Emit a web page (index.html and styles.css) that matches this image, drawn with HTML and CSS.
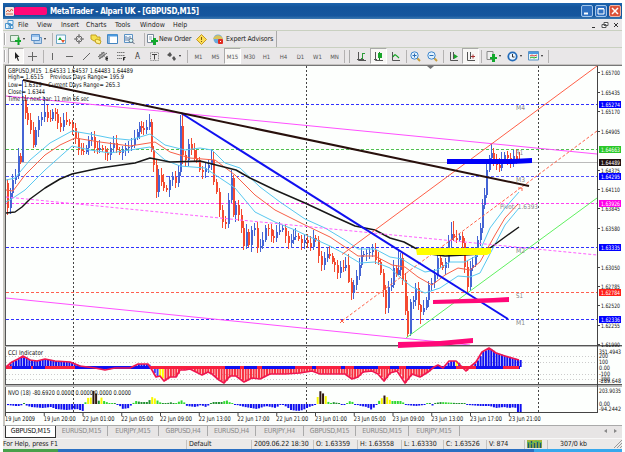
FILE: index.html
```html
<!DOCTYPE html>
<html lang="en">
<head>
    <meta charset="UTF-8">
    <meta name="viewport" content="width=device-width, initial-scale=1.0">
    <title>MetaTrader - Alpari UK - [GBPUSD,M15]</title>
    <link rel="stylesheet" href="styles.css">
</head>
<body>
    <div class="window">
        <div class="titlebar">
            <svg class="app-icon" width="9" height="9" viewBox="0 0 9 9"><rect width="9" height="9" rx="1" fill="#f3e6e0"/><path d="M1 5l2-2 1.500 2 2-3L8 4M1 7h7" stroke="#d0604a" fill="none"/></svg>
            <span class="redacted"></span>
            <span class="title">MetaTrader - Alpari UK - [GBPUSD,M15]</span>
            <div class="win-buttons">
                <span><svg width="10" height="10"><path d="M2 7.500h4" stroke="#fff" stroke-width="2"/></svg></span>
                <span><svg width="10" height="10"><path d="M2 3h6v5H2zM2 2.500h6" stroke="#fff" fill="none"/></svg></span>
                <span class="close"><svg width="10" height="10"><path d="M2 2l6 6M8 2L2 8" stroke="#fff" stroke-width="1.500"/></svg></span>
            </div>
        </div>

        <div class="menubar">
            <svg width="9" height="9" viewBox="0 0 9 9"><path d="M3 .5h5v4H3zM.5 3.500h5v5h-5zM4 5.500h4v3H4z" fill="#e8f4fc" stroke="#4b94cc"/></svg>
            <span>File</span><span>View</span><span>Insert</span><span>Charts</span><span>Tools</span><span>Window</span><span>Help</span>
            <div class="mdi-buttons">
                <svg width="8" height="8"><path d="M2 6.500h3" stroke="#333"/></svg>
                <svg width="8" height="8"><path d="M3 1.500h4v3H3zM1 3.500h4v3H1z" stroke="#555" fill="#fff"/></svg>
                <svg width="8" height="8"><path d="M2 2l4 4M6 2L2 6" stroke="#333"/></svg>
            </div>
        </div>

        <div class="toolbar standard">
            <i class="grip"></i>
            <span><svg width="11" height="11"><path d="M.5 1.500h8v6h-8z" fill="#e6f3e9" stroke="#6f9a78"/><path d="M5 6h2.500V3.500h2V6H12v2H9.500v3h-2V8H5z" fill="#12a82c"/></svg><b class="caret"></b></span>
            <span><svg width="11" height="11"><path d="M3 3.500h7.500v6H3z" fill="#bcd6f0" stroke="#6795c4"/><path d="M.5 .5h8v6h-8z" fill="#d9eafa" stroke="#5a8fc7"/><path d="M1 2h7" stroke="#5a9be0"/></svg><b class="caret"></b></span>
            <i class="sep"></i>
            <span><svg width="11" height="11"><path d="M.5 1h9v8.500h-9z" fill="#f4fbff" stroke="#6aa5c4"/><path d="M2 6l2-3 2 3z" fill="#19a52a"/><path d="M5 6h4L7 9z" fill="#e2542d"/></svg></span>
            <span><svg width="10" height="10"><circle cx="5" cy="5" r="3" fill="none" stroke="#666"/><path d="M5 0v4M5 6v4M0 5h4M6 5h4" stroke="#666"/></svg></span>
            <span><svg width="12" height="11"><path d="M1 1h5l1 2h3v4H4L1 5z" fill="#f6e14c" stroke="#c4a221"/><path d="M5 6l2-1 4 2-1 3-4-1z" fill="#fff18a" stroke="#c4a221"/></svg></span>
            <span><svg width="11" height="10"><path d="M.5 .5h10v9H.5z" fill="#fff" stroke="#4385c0"/><path d="M1 1.500h9" stroke="#4c9be2" stroke-width="2"/><path d="M2 2v7" stroke="#86b3de" stroke-width="2"/></svg></span>
            <span><svg width="11" height="11"><path d="M.5 .5h8v8h-8z" fill="#eef6fc" stroke="#5b92c4"/><path d="M2 2v5M4 3v4M6 2v3" stroke="#5c7da6"/><circle cx="7" cy="6.500" r="2" fill="#dff" stroke="#678"/><path d="M8.500 8l2 2" stroke="#567"/></svg></span>
            <i class="sep"></i>
            <span class="wide"><svg width="11" height="11"><path d="M.5 .5h6v8h-6z" fill="#fff" stroke="#789"/><path d="M2 3h3M2 5h3" stroke="#9ab"/><path d="M4 6h2V4h3v2h2v2H9v3H6V8H4z" fill="#12a82c"/></svg><em>New Order</em></span>
            <span><svg width="11" height="11"><path d="M5.500 .5l5 5-5 5-5-5z" fill="#fbdd56" stroke="#c79b22"/><path d="M5.500 3v3M5.500 7v1" stroke="#7d5a10"/></svg></span>
            <span class="wide ea"><svg width="12" height="11"><circle cx="6" cy="5" r="4.500" fill="#6ba9da"/><path d="M1 5c2-5 8-5 10 0z" fill="#d9c25a"/><rect x="6" y="5" width="5" height="5" rx="1" fill="#e02b20"/><path d="M8 7h1v1H8z" fill="#fff"/></svg><em>Expert Advisors</em></span>
        </div>

        <div class="toolbar drawing">
            <i class="grip"></i>
            <span class="pressed"><svg width="9" height="9"><path d="M3 0v7l1.500-1.500L6 9l1-.6L5.600 5H7.500z" fill="#222"/></svg></span>
            <span><svg width="9" height="9"><path d="M4.500 0v9M0 4.500h9" stroke="#666"/></svg></span>
            <i class="sep"></i>
            <span><svg width="9" height="9"><path d="M4.500 1v7" stroke="#666"/></svg></span>
            <span><svg width="9" height="9"><path d="M1 4.500h7" stroke="#666"/></svg></span>
            <span><svg width="9" height="9"><path d="M1 8l7-7" stroke="#666"/></svg></span>
            <span><svg width="11" height="10"><path d="M0 6l6-5M1 8l8-6M2 3v5M4 1v6M6 1v5" stroke="#666"/><path d="M10 6H8v3h2M8 7.500h2" stroke="#222" fill="none"/></svg></span>
            <span><svg width="10" height="10"><path d="M1 1.500h8M1 4.500h8M1 7.500h5" stroke="#777" stroke-dasharray="1.500 .5"/><path d="M9.500 6.500h-2v3M8 8h1" stroke="#222" fill="none"/></svg></span>
            <span class="glyph">A</span>
            <span><svg width="9" height="9"><path d="M.5 .5h8v8h-8z" fill="none" stroke="#888" stroke-dasharray="1 .7"/><path d="M2 2.500h5M4.500 2.500v5" stroke="#444"/></svg></span>
            <span><svg width="10" height="9"><path d="M0 3l3-3 2 3-2 2zM5 6l2-2 2 3-2 2z" fill="#555"/></svg><b class="caret"></b></span>
            <i class="sep"></i>
            <span>M1</span><span>M5</span><span class="pressed">M15</span><span>M30</span><span>H1</span><span>H4</span><span>D1</span><span>W1</span><span>MN</span>
            <i class="end"></i>
            <span><svg width="9" height="9"><path d="M1.500 0v8.500H9M0 7.500h7" stroke="#555" fill="none"/><path d="M5.500 1v6M5 1.500h3M4 6.500h2" stroke="#2c9a38" fill="none"/></svg></span>
            <span class="pressed"><svg width="9" height="9"><path d="M1.500 0v8.500H9M0 7.500h3" stroke="#555" fill="none"/><path d="M5.500 0v8" stroke="#187b24"/><rect x="4" y="1" width="4" height="5" fill="#19a52a"/></svg></span>
            <span><svg width="9" height="9"><path d="M1.500 0v8.500H9" stroke="#555" fill="none"/><path d="M2 5c2-4 3-2 6 1" stroke="#19a52a" fill="none" stroke-width="1.300"/></svg></span>
            <i class="sep"></i>
            <span><svg width="11" height="11"><path d="M7 7l3 3" stroke="#c79e3c" stroke-width="2"/><circle cx="4.500" cy="4.500" r="3.700" fill="#e2f2fd" stroke="#3f86cc"/><path d="M2.500 4.500h4M4.500 2.500v4" stroke="#2b6cb4"/></svg></span>
            <span><svg width="11" height="11"><path d="M7 7l3 3" stroke="#c79e3c" stroke-width="2"/><circle cx="4.500" cy="4.500" r="3.700" fill="#e2f2fd" stroke="#3f86cc"/><path d="M2.500 4.500h4" stroke="#2b6cb4"/></svg></span>
            <i class="sep"></i>
            <span><svg width="9" height="9"><path d="M1.500 0v8.500H9M4.500 0v7" stroke="#555" fill="none"/><path d="M5 2l4 2.500L5 7z" fill="#19a52a"/></svg></span>
            <span class="pressed"><svg width="9" height="9"><path d="M1.500 0v8.500H9M4.500 0v7" stroke="#555" fill="none"/><path d="M5 4.500h4M7 2.500v4" stroke="#a33" /></svg></span>
            <i class="sep"></i>
            <span><svg width="11" height="11"><path d="M1 .5h6v8H1z" fill="#eee" stroke="#888"/><path d="M4 6h2V3h3v3h2v2H9v3H6V8H4z" fill="#12a82c"/></svg><b class="caret"></b></span>
            <span><svg width="11" height="11"><circle cx="5.500" cy="5.500" r="4.200" fill="#e9f5ff" stroke="#236bb8" stroke-width="1.800"/><path d="M5.500 3v3h2" stroke="#333" fill="none"/></svg><b class="caret"></b></span>
            <span><svg width="11" height="10"><path d="M.5 .5h10v8.500H.5z" fill="#e8f6f5" stroke="#5b92c4"/><path d="M1 2h9" stroke="#4c9be2" stroke-width="2"/><path d="M2 5l2-1 2 1 3-1" stroke="#d44" fill="none"/><path d="M2 7l2-1 2 1 3-1" stroke="#2a2" fill="none"/></svg><b class="caret"></b></span>
            <i class="sep"></i>
        </div>

        <svg class="chart" id="chart" width="622" height="361" viewBox="0 64 622 361"></svg>

        <div class="tabs">
            <span class="active">GBPUSD,M15</span><span>EURUSD,M15</span><span>EURJPY,M15</span><span>GBPUSD,H4</span><span>EURUSD,H4</span><span>EURJPY,H4</span><span>GBPUSD,M15</span><span>EURUSD,M15</span><span>EURJPY,M15</span>
            <svg class="tab-scroll" width="16" height="6"><path d="M4 1L1 3l3 2zM11 1l3 2-3 2z" fill="#888"/></svg>
        </div>

        <div class="statusbar">
            <span>For Help, press F1</span>
            <span>Default</span>
            <span>2009.06.22 18:30</span>
            <span>O: 1.63359</span>
            <span>H: 1.63558</span>
            <span>L: 1.63330</span>
            <span>C: 1.63526</span>
            <span>V: 874</span>
            <span><svg width="15" height="8"><rect width="15" height="8" fill="#a8b43c"/><path d="M1.500 2v6M4.500 1v7M7.500 3v5M10.500 1v7M13.500 2v6" stroke="#175a73" stroke-width="1.500"/><path d="M0 2l4 2 5-3 6 2" stroke="#4bc05a" fill="none"/></svg></span>
            <span>307/0 kb</span>
            <svg class="resize" width="8" height="8"><path d="M0 8l8-8M3 8l5-5M6 8l2-2" stroke="#999"/></svg>
        </div>
        <div class="taskbar"><i class="start"></i><i class="tray"></i></div>
    </div>
    <script src="chart.js"></script>
</body>
</html>
```
FILE: styles.css
```css
* {
    box-sizing: border-box;
}
body {
    margin: 0;
    background: #fff;
    font-family: "DejaVu Sans Condensed", "DejaVu Sans", sans-serif;
    font-size: 7px;
    color: #222;
    overflow: hidden;
}
svg {
    display: block;
    flex: none;
}
.window {
    width: 622px;
    height: 452px;
    padding-top: 3px;
    display: flex;
    flex-direction: column;
    white-space: nowrap;
}

/* title */
.titlebar {
    height: 16px;
    margin-left: 3px;
    padding-left: 2px;
    display: flex;
    align-items: center;
    background: linear-gradient(#1c64ae, #13549b 25%, #15569e 80%, #3c79b2);
    flex: none;
}
.redacted {
    width: 33px;
    height: 8px;
    margin-left: 0;
    border-radius: 2px;
    background: #ff0878;
}
.title {
    margin-left: 3px;
    color: #fff;
    font-size: 8px;
    font-weight: bold;
    letter-spacing: -0.320px;
}
.win-buttons {
    margin-left: auto;
    display: flex;
    gap: 2px;
    padding-right: 1px;
}
.win-buttons span {
    width: 12px;
    height: 12px;
    border: 1px solid #a4c6ea;
    border-radius: 2px;
    background: #2f70c0;
}
.win-buttons .close {
    background: #dc5238;
    border-color: #f0b6a6;
}

/* menu */
.menubar {
    height: 11px;
    margin-left: 3px;
    padding-left: 2px;
    display: grid;
    grid-template-columns: 13px 19px 24px 25px 29px 25px 33px 20px 1fr;
    align-items: center;
    background: #ebe9ea;
    flex: none;
}
.mdi-buttons {
    display: flex;
    gap: 3px;
    justify-content: flex-end;
    padding-right: 2px;
}

/* toolbars */
.toolbar {
    margin-left: 3px;
    background: #e9e7e8;
    border-top: 1px solid #c9d0c0;
    display: grid;
    flex: none;
}
.toolbar span {
    display: flex;
    align-items: center;
    min-width: 0;
}
.toolbar em {
    font-style: normal;
    font-size: 7px;
    margin-left: 1px;
    letter-spacing: -0.150px;
}
.caret {
    border: 1.500px solid transparent;
    border-top: 2px solid #222;
    border-bottom: 0;
    margin-left: 2px;
    flex: none;
}
.grip {
    width: 2px;
    margin: 2px 1px;
    border-left: 1px solid #aaa;
    border-right: 1px solid #fff;
}
.sep, .end {
    border-left: 1px solid #b4b2b2;
    margin: 2px 0 1px 2px;
}
.standard {
    height: 17px;
    grid-template-columns: 7px 21px 19px 6px 18px 16px 17px 17px 18px 5px 49px 16px 65px;
}
.ea {
    border-right: 1px solid #aaa;
}
.ea em {
    margin-left: 2px;
}
.drawing {
    height: 17px;
    grid-template-columns: 5px 16px 17px 3px repeat(7, 17px) 22px 5px repeat(9, 17px) 10px repeat(3, 17px) 3px 17px 17px 4px 17px 17px 3px 22px 21px 21px 3px;
    font-size: 6px;
    color: #555;
}
.drawing span {
    justify-content: center;
}
.drawing .pressed {
    background: #f8f7f5;
    border: 1px solid;
    border-color: #aaa #fff #fff #aaa;
}
.drawing .glyph {
    font-size: 8px;
    color: #333;
}
.end {
    border-right: 1px solid #aaa;
    margin: 2px 3px 1px 1px;
}

/* chart */
.chart {
    background: #fdfffd;
    overflow: visible;
}
.chart text {
    font-size: 6.500px;
    fill: #111;
}
.chart .scale {
    font-size: 6px;
}
.chart .level {
    fill: #888;
}
.chart .boxed {
    fill: #fff;
    font-size: 6px;
}

/* tabs and status */
.tabs {
    height: 13px;
    margin-left: 3px;
    display: grid;
    grid-template-columns: 53px 52px 51px 49px 48px 48px 52px 53px 51px 1fr;
    background: #e7e5e5;
    border-top: 1px solid #aaa;
    color: #888;
    font-size: 7px;
    flex: none;
}
.tabs span {
    text-align: center;
    line-height: 10px;
    border-right: 1px solid #aaa;
    margin-bottom: 3px;
    letter-spacing: -0.250px;
}
.tabs .active {
    background: #fff;
    color: #111;
    border: 1px solid #333;
    border-top: 0;
    margin: 0 0 1px 2px;
}
.tab-scroll {
    justify-self: end;
    margin: 2px 3px 0 0;
}
.statusbar {
    height: 11px;
    margin-left: 3px;
    display: grid;
    grid-template-columns: 184px 65px 62px 44px 44px 42px 43px 38px 23px 1fr 8px;
    align-items: center;
    background: #ebe9e8;
    border-top: 1px solid #f8f8f8;
    flex: none;
}
.statusbar span {
    height: 9px;
    line-height: 9px;
    padding-left: 2px;
    border-right: 1px solid #c4c2c0;
    letter-spacing: -0.100px;
}
.statusbar span:first-child {
    padding-left: 0;
}
.statusbar span:nth-child(10) {
    padding-left: 12px;
    border: 0;
}
.taskbar {
    flex: 1;
    margin-left: 3px;
    display: flex;
    justify-content: space-between;
    background: #2a6fc2;
}
.start {
    width: 55px;
    background: #48a04a;
}
.tray {
    width: 88px;
    background: #38a8ec;
}
```
FILE: chart.js
```js
const chart = document.getElementById('chart');
const parts = [];

function line(x1, y1, x2, y2, color, width, dash) {
    parts.push(`<line x1="${x1}" y1="${y1}" x2="${x2}" y2="${y2}" stroke="${color}" stroke-width="${width || 1}" ${dash ? `stroke-dasharray="${dash}"` : ''}/>`);
}
function rect(x, y, w, h, color) {
    parts.push(`<rect x="${x}" y="${y}" width="${w}" height="${h}" fill="${color}"/>`);
}
function text(x, y, str, len, cls) {
    parts.push(`<text x="${x}" y="${y}" xml:space="preserve" ${len ? `textLength="${len}" lengthAdjust="spacingAndGlyphs"` : ''} class="${cls || ''}">${str}</text>`);
}
function poly(points, color, width) {
    parts.push(`<polyline points="${points}" fill="none" stroke="${color}" stroke-width="${width || 1}" stroke-linejoin="round"/>`);
}
// linear interpolation over a list of [x, y] points
function valueAt(pts, x) {
    for (let i = 1; i < pts.length; i++) {
        if (x <= pts[i][0]) {
            const [x0, y0] = pts[i - 1], [x1, y1] = pts[i];
            return y0 + (y1 - y0) * (x - x0) / (x1 - x0);
        }
    }
    return pts[pts.length - 1][1];
}
const toPoints = (s) => s.trim().split(/\s+/).map(p => p.split(',').map(Number));

// frame
rect(0, 64, 3, 361, '#fff');
rect(3, 64, 619, 1, '#c4c2c0');
rect(3, 65, 619, 1, '#777');
rect(3, 64, 2, 361, '#c8c6c0');
line(5.5, 66, 5.5, 413, '#555');
parts.push('<path d="M427 66h7l-3.500 3z" fill="#777"/>');

// pivot levels
[[104, '#3030ff'], [149, '#50c050'], [176, '#5050ff'], [203, '#ff40f0'], [247, '#3030ff'], [292, '#ff6050'], [319, '#3030ff']].forEach(([y, color]) => {
    line(6, y + .5, 597, y + .5, color, 1, '3 2');
});
line(6, 162.5, 597, 162.5, '#bbb');
[73.5, 306.5, 538.5].forEach(x => line(x, 66, x, 413, '#444', 1, '2 2'));

// candles: x, close
const closes = toPoints(`
5,183 7,208 10,193 12,180 15,176 18,156 20,162 22,100 25,113 27,120 30,130 33,145 35,130 38,120 41,117 44,112 47,118
50,119 52,112 55,114 57,123 60,127 63,120 66,122 69,124 72,128 75,138 78,150 81,151 83,152 86,148 88,140 91,137 94,148
97,150 99,148 102,150 105,153 107,155 110,148 113,143 116,150 119,153 122,150 125,148 128,147 131,145 134,138 137,132
139,126 141,128 143,130 146,127 149,122 151,150 153,165 156,192 158,175 161,182 163,188 166,190 169,180 172,177 175,183
178,172 180,126 182,155 185,160 188,144 191,150 194,158 196,160 199,170 202,172 205,168 208,165 211,160 213,182 216,192
219,210 222,222 225,224 228,200 231,178 233,215 235,205 238,215 241,228 243,246 246,232 248,245 251,230 254,228 257,248
260,246 262,240 265,228 268,229 271,236 273,238 276,232 279,230 282,228 285,236 288,243 291,240 293,237 295,236 298,239
301,243 304,240 307,243 310,247 313,238 315,240 318,256 321,265 324,258 327,254 329,256 332,262 334,265 337,273 340,267
343,268 345,265 348,282 351,293 353,285 356,276 359,265 361,255 363,254 366,253 369,252 372,250 375,260 378,262 380,273
383,290 385,308 388,287 391,285 393,268 396,275 398,270 400,258 402,280 405,311 407,334 410,302 413,300 415,288 418,305
420,312 423,308 426,300 428,285 431,283 434,275 437,258 440,265 442,268 445,262 448,240 451,234 453,238 456,240 459,236
462,243 464,267 467,287 470,268 472,265 475,250 477,240 480,228 482,205 484,195 486,170 489,158 491,153 493,160 496,165
499,168 501,160 504,155 507,158 510,162 513,156 516,160 519,160`);
const wicks = { 22: [80, 145], 44: [97, 122], 180: [115, 176], 182: [113, 164], 211: [149, 170], 348: [254, 283], 420: [304, 324], 407: [296, 337], 451: [222, 250], 453: [221, 241], 491: [144, 164], 398: [250, 275] };
for (let i = 1; i < closes.length; i++) {
    const [x, close] = closes[i], open = closes[i - 1][1];
    const color = close < open ? '#4464d4' : '#f44a30';
    const top = Math.min(open, close), bottom = Math.max(open, close);
    const [hi, lo] = wicks[x] || [top - 3 - (i * 7) % 6, bottom + 2 + (i * 5) % 6];
    line(x + .5, hi, x + .5, lo, color, 1);
    rect(x, top, 2, Math.max(bottom - top, 1), color);
}

// moving averages
poly('6,180 15,178 30,160 50,143 72,131 90,134 110,138 130,140 150,134 165,145 185,150 200,148 212,150 225,163 240,168 260,187 280,202 305,219 325,228 345,240 358,249 375,249 390,257 402,259 413,266 425,272 437,270 450,262 465,262 478,255 490,228 505,208 519,192', '#58c8f0');
poly('6,190 13,191 25,175 45,155 60,145 75,138 100,142 130,146 155,142 170,152 190,158 215,160 235,175 255,195 275,210 305,225 330,237 345,247 358,256 375,256 392,265 405,267 418,277 432,285 445,275 458,268 470,270 480,262 495,235 505,218 518,204', '#f86048');
poly('6,202 13,198 25,190 45,170 72,146 90,150 110,153 150,147 165,160 180,166 205,168 220,178 235,188 255,212 275,222 295,230 310,237 330,246 345,254 360,263 375,262 390,268 402,279 412,287 425,293 440,288 458,276 470,277 480,273 492,250 505,225 519,208', '#58c8f0');
poly('6,213 15,212 22,207 30,199 45,188 60,179 72,174 100,168 135,163 150,158 170,162 200,161 212,164 224,167 236,170 250,178 275,190 305,203 335,217 355,226 375,230 390,238 404,242 415,248 430,254 445,256 465,255 480,254 490,248 505,237 519,227', '#181818', 1.5);

// channels and trend lines
line(6, 96, 597, 154, '#ff50ff');
line(6, 298, 470, 345, '#ff50ff');
line(6, 197, 597, 255, '#ff60ff', 1, '3 2');
line(342, 254.5, 597, 66, '#ff6048');
line(342, 321, 597, 131, '#ff6048', 1, '3 2');
parts.push('<path d="M340 319l4 4M344 319l-4 4M518 188h4v3" stroke="#ff6048" fill="none"/>');
line(406, 338, 597, 198, '#60f060');
line(181, 113, 508, 319, '#1010f0', 2);
line(23, 80, 529, 186, '#28100c', 2);
[[516, 110, 'M4', 9], [516, 155, 'R1', 7], [516, 182, 'M3', 9], [500, 209, 'Pivot: 1.6393', 38], [516, 253, 'M2', 9], [516, 298, 'S1', 7], [516, 325, 'M1', 9]].forEach(([x, y, s, len]) => text(x, y, s, len, 'level'));

// marker strokes
parts.push('<path d="M447 159h66l19-1v5l-19 1h-66z" fill="#0000f8"/>');
parts.push('<path d="M416 249l4-1h71v5l-4 2h-70z" fill="#ffff00"/>');
parts.push('<path d="M433 300l60-2 16-1v5l-30 1-46 1z" fill="#ff0878"/>');

// chart comment
text(8, 73, 'GBPUSD,M15  1.64533 1.64537 1.64483 1.64489', 125);
text(8, 79, 'High= 1.6515    Previous Days Range= 195.9', 116);
text(8, 86.5, 'Low= 1.6319    Current Days Range= 265.3', 112);
text(8, 94, 'Close= 1.6344', 37);
text(8, 101, 'Time for next bar: 11 min 56 sec', 81);

// sub windows
rect(5, 345, 617, 1, '#555');
rect(5, 346, 617, 1, '#b8b8b8');
rect(5, 384, 617, 1, '#555');
rect(5, 385, 617, 2, '#b8b8b8');
parts.push('<path d="M398 342l42-1 33-3v5l-33 3-42 2z" fill="#ff0878"/>');

// CCI
[356, 362, 374, 379].forEach(y => line(6, y + .5, 597, y + .5, '#ccc', 1, '1 2'));
const cci = toPoints(`6,367 12,362 18,359 23,356 30,360 37,361 45,359 55,361 70,362 80,366 95,368 105,370 115,368 130,368 138,364
148,364 152,370 156,377 160,376 164,381 170,377 176,377 180,370 185,370 190,369 196,372 202,375 208,372 212,374 219,380
224,383 230,376 236,376 244,382 252,378 260,379 270,374 285,374 300,373 312,371 320,374 335,374 345,374 352,379 358,377
363,372 372,371 378,374 384,381 390,373 397,371 405,383 412,374 420,377 428,372 434,367 438,365 443,368 449,361 456,361
461,366 466,371 470,367 476,362 482,352 489,348 496,353 505,356 519,360`);
for (let x = 7; x < 520; x += 2.67) {
    const y = valueAt(cci, x);
    let color = y < 367 ? '#1010f0' : '#f83040';
    if (x > 152 && x < 158) color = '#4040ff';
    if ((x > 159 && x < 162) || (x > 453 && x < 456)) color = '#ffff00';
    rect(x, Math.min(y, 367), 2, Math.abs(y - 367), color);
}
rect(6, 366, 514, 3, '#1010f0');
[[6, 6], [31, 2], [45, 30], [150, 75], [240, 4], [257, 5], [295, 17], [316, 25], [345, 9], [378, 12], [399, 7], [456, 20], [503, 16]].forEach(([x, w]) => rect(x, 366, w, 3, '#f82040'));
poly(cci.map(p => p.join(',')).join(' '), '#f01850', 1.7);
text(8, 355, 'CCI Indicator', 35);

// NVO
const nvo = toPoints(`6,-1 15,-2 20,-2 22,2 24,-1 30,-3 42,-4 50,-3 55,-5 66,-6 76,-5 82,-7 84,0 85,4 88,7 91,6 93,16 95,11 97,2
100,7 103,3 108,1 115,0 119,-2 122,-5 128,-4 131,0 135,3 140,2 147,2 151,7 155,5 158,2 165,0 169,2 175,0 180,4 184,1 186,-2
195,-3 200,-1 205,-3 208,-1 211,2 222,2 225,4 230,1 236,-1 244,-3 256,-5 265,-2 275,-4 280,0 286,-3 290,-6 297,-7 302,-6
308,-3 314,-1 315,3 318,10 320,14 323,9 326,7 328,0 332,2 337,1 342,-1 347,1 350,4 353,0 360,-2 366,-3 371,-6 374,-2 378,3
381,6 384,9 387,6 390,3 400,3 403,1 405,-1 415,-2 423,-1 428,1 431,-2 434,1 440,2 455,1 464,1 467,-1 480,-2 489,-2 495,-4
503,-3 508,-4 514,-3 516,-8 519,-8`);
for (let x = 7; x < 520; x += 2.67) {
    const v = valueAt(nvo, x);
    const h = Math.max(Math.abs(v), 1);
    let color = v < 0 ? '#1010f0' : (x % 3 < 1.5 ? '#30d830' : '#209030');
    if (v > 4) color = '#f8f800';
    if (v > 8) color = '#301810';
    rect(x, v < 0 ? 404 : 404 - h, 2, h, color);
}
text(8, 395, 'NVO (18) -80.6920 0.0000 0.0000 0.0000 0.0000', 123);

// price scale
line(597.5, 66, 597.5, 413, '#444');
[[72, '1.65700'], [92, '1.65435'], [111, '1.65170'], [131, '1.64905'], [170, '1.64375'], [189, '1.64110'], [208, '1.63845'], [228, '1.63580'], [267, '1.63050'], [286, '1.62785'], [305, '1.62520'], [325, '1.62255'], [344, '1.61990']].forEach(([y, s]) => {
    line(597, y + .5, 600, y + .5, '#444');
    text(601, y + 3, s, 19, 'scale');
});
[[104, '1.65274', '#0000ff'], [149, '1.64663', '#28c828'], [162, '1.64489', '#201010'], [176, '1.64295', '#0000ff'], [203, '1.63926', '#ff00e8'], [247, '1.63335', '#0000ff'], [292, '1.62784', '#ff2018'], [319, '1.62336', '#0000ff']].forEach(([y, s, color]) => {
    rect(599, y - 3, 22, 7, color);
    text(601, y + 3, s, 19, 'boxed');
});
[[354, '351.4943', 22], [358, '200', 9], [364, '100', 9], [370, '0.00', 11], [376, '-100', 11], [381, '-200', 11], [383, '-289.648', 22], [393, '203.9035', 22], [406, '0.00', 11], [411, '-94.2442', 22]].forEach(([y, s, len]) => text(599, y, s, len, 'scale'));

// time scale
line(5, 412.5, 598, 412.5, '#444');
['19 Jun 2009', '19 Jun 20:00', '22 Jun 01:00', '22 Jun 05:00', '22 Jun 09:00', '22 Jun 13:00', '22 Jun 17:00', '22 Jun 21:00', '23 Jun 01:00', '23 Jun 05:00', '23 Jun 09:00', '23 Jun 13:00', '23 Jun 17:00', '23 Jun 21:00'].forEach((s, i) => {
    const x = 5 + i * 38.75;
    line(x + .5, 413, x + .5, 416, '#444');
    text(x, 421, s, i ? 32 : 30);
});

chart.innerHTML = parts.join('');
```
